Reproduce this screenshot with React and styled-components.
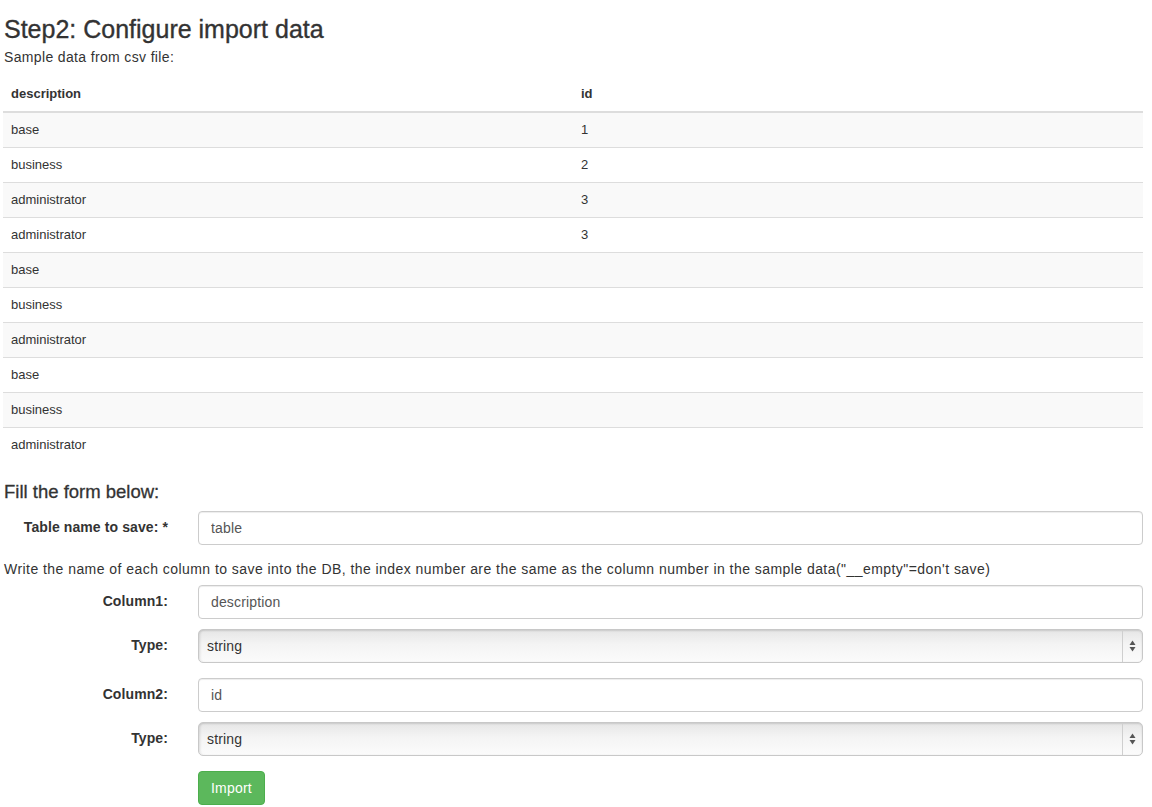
import React from 'react';
import styled, { createGlobalStyle } from 'styled-components';

const GlobalStyle = createGlobalStyle`
  html, body {
    margin: 0;
    padding: 0;
    background: #fff;
  }
  body {
    font-family: "Liberation Sans", Arial, sans-serif;
    font-size: 13px;
    line-height: 1.42857;
    color: #333;
  }
  * { box-sizing: border-box; }
`;

const Page = styled.div`
  padding: 0 9px 0 3px;
`;

const Title = styled.h3`
  margin: 16px 0 4px 1px;
  font-size: 25px;
  font-weight: 500;
  line-height: 1.1;
  -webkit-text-stroke: 0.35px #333;
`;

const Note = styled.p`
  margin: 0 0 10px 1px;
  font-size: 14px;
  letter-spacing: 0.35px;
`;

const Table = styled.table`
  width: 100%;
  border-collapse: collapse;
  border-spacing: 0;
  margin-bottom: 20px;
  table-layout: fixed;
`;

const Th = styled.th`
  text-align: left;
  font-weight: bold;
  padding: 8px;
  line-height: 18px;
  border-bottom: 2px solid #ddd;
  vertical-align: bottom;
`;

const Tr = styled.tr`
  background: ${p => (p.$odd ? '#f9f9f9' : '#fff')};
`;

const Td = styled.td`
  padding: 8px;
  line-height: 18px;
  border-top: 1px solid #ddd;
`;

const SubTitle = styled.h4`
  margin: 0 0 8px 1px;
  font-size: 18.5px;
  font-weight: 500;
  line-height: 1.1;
  -webkit-text-stroke: 0.3px #333;
`;

const Row = styled.div`
  display: grid;
  grid-template-columns: 165px 1fr;
  column-gap: 30px;
  align-items: center;
  margin-bottom: ${p => p.$mb || 15}px;
`;

const Label = styled.label`
  text-align: right;
  font-weight: bold;
  font-size: 14px;
  letter-spacing: 0.1px;
`;

const Input = styled.input`
  display: block;
  width: 100%;
  height: 34px;
  padding: 6px 12px;
  font-family: inherit;
  font-size: 14px;
  letter-spacing: 0.15px;
  color: #555;
  background: #fff;
  border: 1px solid #ccc;
  border-radius: 4px;
  box-shadow: inset 0 1px 1px rgba(0, 0, 0, 0.075);
  outline: none;
`;

const SelectWrap = styled.div`
  position: relative;
  height: 34px;
`;

const Select = styled.select`
  appearance: none;
  -webkit-appearance: none;
  display: block;
  width: 100%;
  height: 34px;
  padding: 0 30px 0 8px;
  font-family: inherit;
  font-size: 14px;
  letter-spacing: 0.15px;
  color: #333;
  border: 1px solid #c8c8c8;
  border-radius: 5px;
  background: linear-gradient(to bottom, #e6e6e6 0%, #f4f4f4 45%, #fbfbfb 100%);
  box-shadow: inset 0 1px 2px rgba(0, 0, 0, 0.12), inset 2px 0 2px rgba(0, 0, 0, 0.05);
  outline: none;
`;

const Arrows = styled.span`
  position: absolute;
  top: 1px;
  right: 1px;
  bottom: 1px;
  width: 20px;
  border-left: 1px solid #cfcfcf;
  display: flex;
  align-items: center;
  justify-content: center;
  pointer-events: none;
`;

const Hint = styled.p`
  margin: 0 0 5px 1px;
  font-size: 14px;
  letter-spacing: 0.45px;
`;

const Button = styled.button`
  height: 34px;
  padding: 6px 12px;
  font-family: inherit;
  font-size: 14px;
  letter-spacing: 0.2px;
  color: #fff;
  background: #5cb85c;
  border: 1px solid #4cae4c;
  border-radius: 4px;
  cursor: pointer;
`;

const ButtonRow = styled.div`
  padding-left: 195px;
`;

const rows = [
  ['base', '1'],
  ['business', '2'],
  ['administrator', '3'],
  ['administrator', '3'],
  ['base', ''],
  ['business', ''],
  ['administrator', ''],
  ['base', ''],
  ['business', ''],
  ['administrator', ''],
];

function TypeSelect() {
  return (
    <SelectWrap>
      <Select defaultValue="string">
        <option value="string">string</option>
        <option value="integer">integer</option>
        <option value="float">float</option>
        <option value="__empty">__empty</option>
      </Select>
      <Arrows>
        <svg width="7" height="12" viewBox="0 0 7 12">
          <path d="M3.5 0.5 L6.5 5 L0.5 5 Z" fill="#555" />
          <path d="M0.5 7 L6.5 7 L3.5 11.5 Z" fill="#555" />
        </svg>
      </Arrows>
    </SelectWrap>
  );
}

export default function App() {
  return (
    <Page>
      <GlobalStyle />
      <Title>Step2: Configure import data</Title>
      <Note>Sample data from csv file:</Note>
      <Table>
        <thead>
          <tr>
            <Th>description</Th>
            <Th>id</Th>
          </tr>
        </thead>
        <tbody>
          {rows.map((r, i) => (
            <Tr key={i} $odd={i % 2 === 0}>
              <Td>{r[0]}</Td>
              <Td>{r[1]}</Td>
            </Tr>
          ))}
        </tbody>
      </Table>

      <SubTitle>Fill the form below:</SubTitle>
      <Row>
        <Label>Table name to save: *</Label>
        <Input defaultValue="table" />
      </Row>
      <Hint>
        Write the name of each column to save into the DB, the index number are the same as the column number in the sample data("__empty"=don't save)
      </Hint>
      <Row $mb={10}>
        <Label>Column1:</Label>
        <Input defaultValue="description" />
      </Row>
      <Row>
        <Label>Type:</Label>
        <TypeSelect />
      </Row>
      <Row $mb={10}>
        <Label>Column2:</Label>
        <Input defaultValue="id" />
      </Row>
      <Row>
        <Label>Type:</Label>
        <TypeSelect />
      </Row>
      <ButtonRow>
        <Button type="submit">Import</Button>
      </ButtonRow>
    </Page>
  );
}
